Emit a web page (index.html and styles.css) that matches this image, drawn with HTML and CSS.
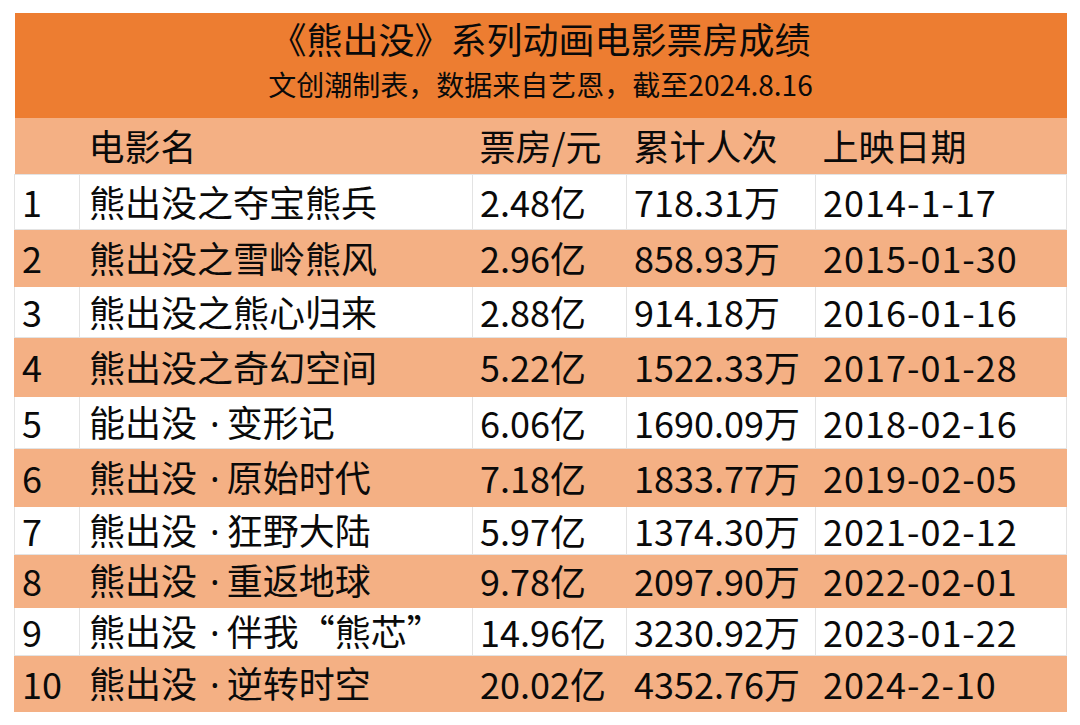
FILE: index.html
```html
<!DOCTYPE html>
<html lang="zh-CN">
<head>
<meta charset="utf-8">
<title>《熊出没》系列动画电影票房成绩</title>
<link rel="stylesheet" href="styles.css">
</head>
<body>
<div class="page">
  <table class="box">
    <colgroup>
      <col class="c-no"><col class="c-name"><col class="c-box"><col class="c-ppl"><col class="c-date">
    </colgroup>
    <thead>
      <tr class="banner">
        <th colspan="5">
          <div class="title">《熊出没》系列动画电影票房成绩</div>
          <div class="subtitle">文创潮制表，数据来自艺恩，截至2024.8.16</div>
        </th>
      </tr>
      <tr class="head">
        <th></th><th>电影名</th><th>票房/元</th><th>累计人次</th><th>上映日期</th>
      </tr>
    </thead>
    <tbody>
      <tr class="w"><td>1</td><td>熊出没之夺宝熊兵</td><td>2.48亿</td><td>718.31万</td><td class="date">2014-1-17</td></tr>
      <tr class="o"><td>2</td><td>熊出没之雪岭熊风</td><td>2.96亿</td><td>858.93万</td><td class="date">2015-01-30</td></tr>
      <tr class="w"><td>3</td><td>熊出没之熊心归来</td><td>2.88亿</td><td>914.18万</td><td class="date">2016-01-16</td></tr>
      <tr class="o"><td>4</td><td>熊出没之奇幻空间</td><td>5.22亿</td><td>1522.33万</td><td class="date">2017-01-28</td></tr>
      <tr class="w"><td>5</td><td>能出没<span class="dot">·</span>变形记</td><td>6.06亿</td><td>1690.09万</td><td class="date">2018-02-16</td></tr>
      <tr class="o"><td>6</td><td>熊出没<span class="dot">·</span>原始时代</td><td>7.18亿</td><td>1833.77万</td><td class="date">2019-02-05</td></tr>
      <tr class="w"><td>7</td><td>熊出没<span class="dot">·</span>狂野大陆</td><td>5.97亿</td><td>1374.30万</td><td class="date">2021-02-12</td></tr>
      <tr class="o"><td>8</td><td>熊出没<span class="dot">·</span>重返地球</td><td>9.78亿</td><td>2097.90万</td><td class="date">2022-02-01</td></tr>
      <tr class="w"><td>9</td><td>熊出没<span class="dot">·</span>伴我“熊芯”</td><td>14.96亿</td><td>3230.92万</td><td class="date">2023-01-22</td></tr>
      <tr class="o"><td>10</td><td>熊出没<span class="dot">·</span>逆转时空</td><td>20.02亿</td><td>4352.76万</td><td class="date">2024-2-10</td></tr>
    </tbody>
  </table>
</div>
</body>
</html>
```
FILE: styles.css
```css
html, body {
  margin: 0;
  padding: 0;
  background: #ffffff;
}

.page {
  padding: 13px 14px 0 14px;
  font-family: "Noto Sans CJK SC", "Noto Sans", sans-serif;
  color: #0a0a0a;
}

.box {
  width: 1052px;
  border-collapse: collapse;
  table-layout: fixed;
}

.c-no { width: 65px; }
.c-name { width: 393px; }
.c-box { width: 154px; }
.c-ppl { width: 189px; }
.c-date { width: 251px; }

.box th,
.box td {
  padding: 0 0 0 7px;
  text-align: left;
  font-weight: 400;
  font-size: 36px;
  line-height: 1.2;
  white-space: nowrap;
  vertical-align: middle;
}

.box td:nth-child(2),
.head th:nth-child(2) {
  padding-left: 9px;
}

.box td.date {
  letter-spacing: 1px;
}

.dot {
  font-family: "Noto Sans", sans-serif;
  padding: 0 7px 0 13px;
}

.banner th {
  background: #ed7d31;
  height: 105px;
  padding: 0;
  text-align: center;
  vertical-align: top;
}

.title {
  font-size: 36px;
  line-height: 1;
  padding-top: 7px;
}

.subtitle {
  font-size: 28px;
  line-height: 1;
  padding-top: 14px;
}

.head th {
  background: #f4b084;
  height: 56px;
}

.w td {
  background: #ffffff;
  border: 1px solid #e3e3e3;
}

.o td {
  background: #f4b084;
  border: 1px solid #f4b084;
}

tbody tr:nth-child(1) td { height: 54px; }
tbody tr:nth-child(2) td { height: 56px; }
tbody tr:nth-child(3) td { height: 50px; }
tbody tr:nth-child(4) td { height: 58px; }
tbody tr:nth-child(5) td { height: 51px; }
tbody tr:nth-child(6) td { height: 57px; }
tbody tr:nth-child(7) td { height: 47px; }
tbody tr:nth-child(8) td { height: 52px; }
tbody tr:nth-child(9) td { height: 47px; }
tbody tr:nth-child(10) td { height: 55px; }
```
